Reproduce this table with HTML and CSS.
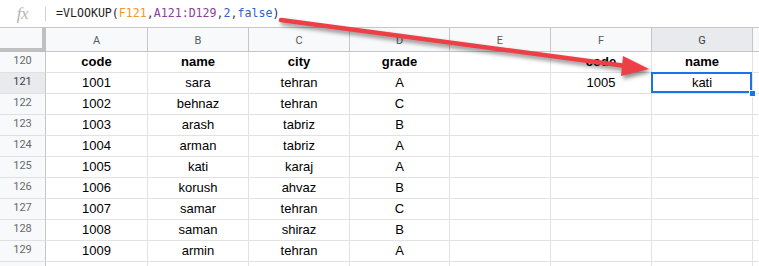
FILE: index.html
```html
<!DOCTYPE html>
<html>
<head>
<meta charset="utf-8">
<link rel="stylesheet" href="styles.css">
</head>
<body>
<div class="page">
  <div class="formula-bar">
    <span class="fx">fx</span>
    <span class="sep"></span>
    <span class="formula"><span class="f-fn">=VLOOKUP(</span><span class="f-orange">F121</span><span class="f-comma">,</span><span class="f-purple">A121:D129</span><span class="f-comma">,</span><span class="f-blue">2</span><span class="f-comma">,</span><span class="f-blue">false</span><span class="f-paren">)</span></span>
  </div>
  <div class="sheet">
    <div class="corner"></div>
    <div class="colhead">A</div>
    <div class="colhead">B</div>
    <div class="colhead">C</div>
    <div class="colhead">D</div>
    <div class="colhead">E</div>
    <div class="colhead">F</div>
    <div class="colhead active">G</div>
    <div class="colhead rest"></div>

    <div class="rowhead">120</div>
    <div class="cell bold">code</div><div class="cell bold">name</div><div class="cell bold">city</div><div class="cell bold">grade</div><div class="cell"></div><div class="cell bold">code</div><div class="cell bold">name</div><div class="cell rest"></div>

    <div class="rowhead active">121</div>
    <div class="cell">1001</div><div class="cell">sara</div><div class="cell">tehran</div><div class="cell">A</div><div class="cell"></div><div class="cell">1005</div><div class="cell selected">kati<span class="handle"></span></div><div class="cell rest"></div>

    <div class="rowhead">122</div>
    <div class="cell">1002</div><div class="cell">behnaz</div><div class="cell">tehran</div><div class="cell">C</div><div class="cell"></div><div class="cell"></div><div class="cell"></div><div class="cell rest"></div>

    <div class="rowhead">123</div>
    <div class="cell">1003</div><div class="cell">arash</div><div class="cell">tabriz</div><div class="cell">B</div><div class="cell"></div><div class="cell"></div><div class="cell"></div><div class="cell rest"></div>

    <div class="rowhead">124</div>
    <div class="cell">1004</div><div class="cell">arman</div><div class="cell">tabriz</div><div class="cell">A</div><div class="cell"></div><div class="cell"></div><div class="cell"></div><div class="cell rest"></div>

    <div class="rowhead">125</div>
    <div class="cell">1005</div><div class="cell">kati</div><div class="cell">karaj</div><div class="cell">A</div><div class="cell"></div><div class="cell"></div><div class="cell"></div><div class="cell rest"></div>

    <div class="rowhead">126</div>
    <div class="cell">1006</div><div class="cell">korush</div><div class="cell">ahvaz</div><div class="cell">B</div><div class="cell"></div><div class="cell"></div><div class="cell"></div><div class="cell rest"></div>

    <div class="rowhead">127</div>
    <div class="cell">1007</div><div class="cell">samar</div><div class="cell">tehran</div><div class="cell">C</div><div class="cell"></div><div class="cell"></div><div class="cell"></div><div class="cell rest"></div>

    <div class="rowhead">128</div>
    <div class="cell">1008</div><div class="cell">saman</div><div class="cell">shiraz</div><div class="cell">B</div><div class="cell"></div><div class="cell"></div><div class="cell"></div><div class="cell rest"></div>

    <div class="rowhead">129</div>
    <div class="cell">1009</div><div class="cell">armin</div><div class="cell">tehran</div><div class="cell">A</div><div class="cell"></div><div class="cell"></div><div class="cell"></div><div class="cell rest"></div>

    <div class="rowhead"></div>
    <div class="cell"></div><div class="cell"></div><div class="cell"></div><div class="cell"></div><div class="cell"></div><div class="cell"></div><div class="cell"></div><div class="cell rest"></div>
  </div>

  <svg class="arrow" width="759" height="266" viewBox="0 0 759 266">
    <line x1="281" y1="20" x2="626" y2="66" stroke="#ec3f46" stroke-width="4.5" stroke-linecap="round"/>
    <polygon points="649,69 623,56 621,76" fill="#ec3f46"/>
  </svg>
</div>
</body>
</html>
```

FILE: styles.css
```css
* { box-sizing: border-box; }

html, body {
  margin: 0;
  padding: 0;
  background: #ffffff;
  overflow: hidden;
}

.page {
  position: relative;
  width: 759px;
  height: 266px;
  overflow: hidden;
  font-family: "Liberation Sans", Arial, sans-serif;
}

.formula-bar {
  height: 27px;
  display: flex;
  align-items: center;
  background: #ffffff;
}

.fx {
  width: 45px;
  text-align: center;
  font-family: "Liberation Serif", "Times New Roman", serif;
  font-style: italic;
  font-size: 17px;
  color: #b4b4b4;
  line-height: 27px;
  letter-spacing: -0.5px;
}

.sep {
  width: 1px;
  height: 14px;
  background: #d0d0d0;
}

.formula {
  margin-left: 10px;
  font-family: "DejaVu Sans Mono", "Liberation Mono", monospace;
  font-size: 11.6px;
  line-height: 27px;
  color: #222222;
  white-space: pre;
}

.f-fn { color: #1f1f1f; }
.f-orange { color: #f4962a; }
.f-purple { color: #8a3f99; }
.f-blue { color: #2f5fd0; }
.f-comma { color: #444444; }
.f-paren { color: #1b2a6b; }

.sheet {
  display: grid;
  grid-template-columns: 46px 102px 101px 101px 100px 101px 101px 101px 1fr;
  grid-template-rows: 25px repeat(11, 21px);
}

.corner {
  background: #f8f9fa;
  border-top: 1px solid #c4c7c5;
  border-right: 4px solid #c0c0c0;
  border-bottom: 4px solid #c0c0c0;
}

.colhead {
  background: #f8f9fa;
  border-top: 1px solid #c4c7c5;
  border-right: 1px solid #c4c7c5;
  border-bottom: 1px solid #c4c7c5;
  font-family: Roboto, "Liberation Sans", sans-serif;
  font-size: 11px;
  color: #575a5e;
  display: flex;
  align-items: center;
  justify-content: center;
  padding-top: 1px;
}

.colhead.active {
  background: #e8eaed;
  color: #3c4043;
}

.colhead.rest {
  border-right: none;
}

.rowhead {
  background: #f8f9fa;
  border-right: 1px solid #c4c7c5;
  border-bottom: 1px solid #e0e0e0;
  font-family: Roboto, "Liberation Sans", sans-serif;
  font-size: 11px;
  color: #666a6e;
  text-align: center;
  line-height: 18px;
}

.rowhead.active {
  background: #e8eaed;
  color: #3c4043;
}

.cell {
  position: relative;
  border-right: 1px solid #e2e2e3;
  border-bottom: 1px solid #e2e2e3;
  font-size: 13px;
  color: #000000;
  text-align: center;
  line-height: 20px;
  white-space: nowrap;
}

.cell.rest {
  border-right: none;
}

.cell.bold {
  font-weight: bold;
}

.cell.selected::after {
  content: "";
  position: absolute;
  top: -1px;
  left: -1px;
  right: 0;
  bottom: 0;
  border: 2px solid #1a73e8;
}

.handle {
  position: absolute;
  right: -4px;
  bottom: -4px;
  width: 7px;
  height: 7px;
  background: #1a73e8;
  border: 1px solid #ffffff;
  z-index: 2;
}

.arrow {
  position: absolute;
  left: 0;
  top: 0;
  pointer-events: none;
  filter: drop-shadow(2px 3px 2px rgba(0, 0, 0, 0.45));
}
```
